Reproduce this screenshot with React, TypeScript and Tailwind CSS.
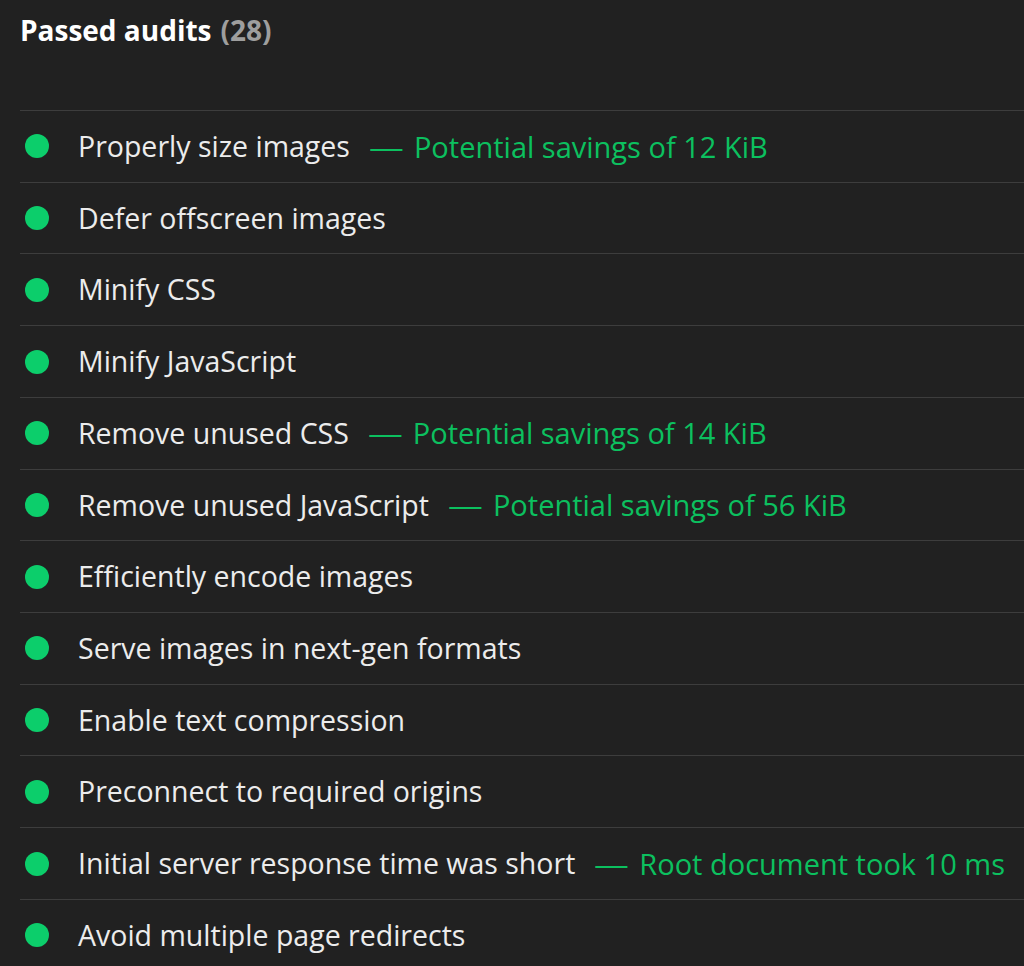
const audits: { title: string; detail?: string }[] = [
  { title: 'Properly size images', detail: 'Potential savings of 12 KiB' },
  { title: 'Defer offscreen images' },
  { title: 'Minify CSS' },
  { title: 'Minify JavaScript' },
  { title: 'Remove unused CSS', detail: 'Potential savings of 14 KiB' },
  { title: 'Remove unused JavaScript', detail: 'Potential savings of 56 KiB' },
  { title: 'Efficiently encode images' },
  { title: 'Serve images in next-gen formats' },
  { title: 'Enable text compression' },
  { title: 'Preconnect to required origins' },
  { title: 'Initial server response time was short', detail: 'Root document took 10 ms' },
  { title: 'Avoid multiple page redirects' },
];

export default function App() {
  return (
    <div
      className="h-[966px] w-[1024px] overflow-hidden bg-[#212121] pl-[20px]"
      style={{ fontFamily: '"Open Sans", "Noto Sans", sans-serif' }}
    >
      {/* Header */}
      <div className="flex h-[110px] items-start pt-[9px] text-[28px] font-bold">
        <span className="text-white">Passed audits</span>
        <span className="ml-[9px] text-[#9e9e9e]">(28)</span>
      </div>

      {/* Audit rows */}
      <div>
        {audits.map((a) => (
          <div
            key={a.title}
            className="flex h-[71.73px] items-center border-t border-[#3d3d3d] text-[28.5px] text-[#ececec]"
          >
            <span className="ml-[5px] h-[24px] w-[24px] shrink-0 rounded-full bg-[#0cce6b]" />
            <span className="ml-[29px] whitespace-nowrap">{a.title}</span>
            {a.detail && (
              <span className="ml-[22px] flex items-center whitespace-nowrap text-[29px] text-[#0cc05f]">
                <span className="inline-block w-[30px] scale-x-[1.2]">—</span>
                <span className="ml-[12px]">{a.detail}</span>
              </span>
            )}
          </div>
        ))}
      </div>
    </div>
  );
}
